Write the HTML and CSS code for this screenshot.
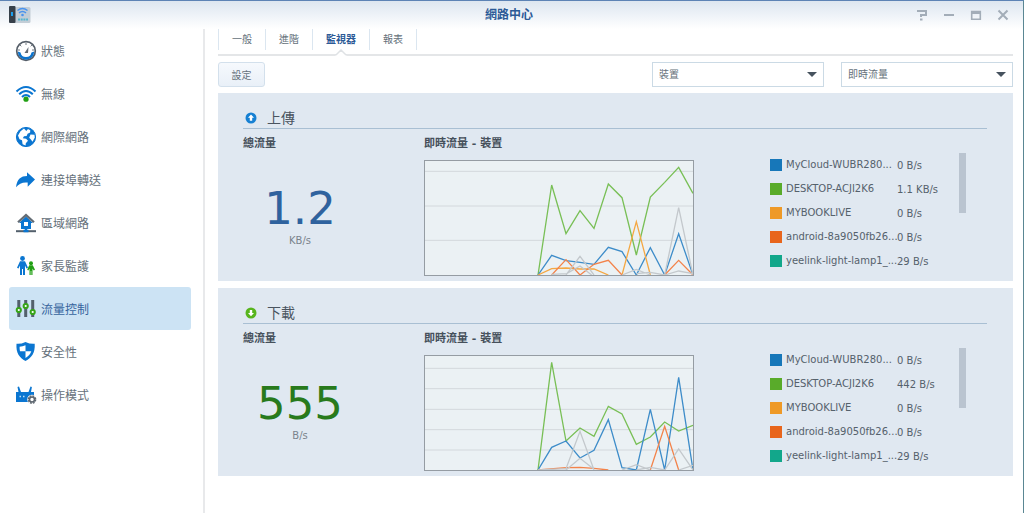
FILE: index.html
```html
<!DOCTYPE html>
<html lang="zh-Hant">
<head>
<meta charset="utf-8">
<title>網路中心</title>
<link rel="stylesheet" href="styles.css">
</head>
<body>
<div class="window">
  <header class="titlebar">
    <svg class="app-icon" width="22" height="18" viewBox="0 0 22 18" aria-hidden="true">
      <rect x="5" y="1" width="16.500" height="16" rx="1.500" fill="#c3cdd6"/>
      <rect x="0" y="0" width="6.500" height="17" rx="1" fill="#36404a"/>
      <rect x="2" y="6" width="2" height="4" fill="#1ba0ee"/>
      <g fill="none" stroke="#4a93ee" stroke-width="1.500"><path d="M8.500 4.500Q13.500 0.500 18.500 4.500"/><path d="M10 6.800Q13.500 4 17 6.800"/></g>
      <circle cx="13.500" cy="9" r="1.300" fill="#4a93ee"/>
      <path d="M9 13.500h10" stroke="#55b6cf" stroke-width="2" stroke-dasharray="2 .7"/>
    </svg>
    <h1 class="title">網路中心</h1>
    <div class="window-buttons">
      <button type="button" aria-label="說明"><svg width="12" height="12" viewBox="0 0 12 12"><path d="M1 2h9v4H5v2M4 10.500h2.500" fill="none" stroke="currentColor" stroke-width="2"/></svg></button>
      <button type="button" aria-label="最小化"><svg width="12" height="12" viewBox="0 0 12 12"><path d="M1 6h10" stroke="currentColor" stroke-width="2"/></svg></button>
      <button type="button" aria-label="最大化"><svg width="12" height="12" viewBox="0 0 12 12"><path d="M1.700 2.500h8.600v7.700H1.700z" fill="none" stroke="currentColor" stroke-width="1.600"/><path d="M1 2h10v3H1z" fill="currentColor"/></svg></button>
      <button type="button" aria-label="關閉"><svg width="12" height="12" viewBox="0 0 12 12"><path d="M1.500 1.500l9 9M10.500 1.500l-9 9" stroke="currentColor" stroke-width="2"/></svg></button>
    </div>
  </header>

  <div class="body">
    <nav class="sidebar" aria-label="功能">
      <a class="nav-item" href="#status"><svg width="22" height="22" viewBox="0 0 22 22"><circle cx="11" cy="11" r="9.300" fill="#fff" stroke="#555e68" stroke-width="1.700"/><path d="M2.800 11.500a8.200 8.200 0 0 0 16.400 0l-2.700 1a5.600 5.600 0 0 1-11 0z" fill="#0c73cc"/><path d="M11 3v2M5 5l1.300 1.300M17 5l-1.300 1.300M3 10h2M19 10h-2" stroke="#747c84"/><path d="M13.500 7l-.5 6H9.500z" fill="#626b75"/></svg><span>狀態</span></a>
      <a class="nav-item" href="#wireless"><svg width="22" height="22" viewBox="0 0 22 22"><g fill="none" stroke="#0b76d1" stroke-width="2"><path d="M1.500 8.500Q11-.5 20.500 8.500"/><path d="M4.200 11.300Q11 4.500 17.800 11.300"/><path d="M7 14Q11 10 15 14"/></g><circle cx="11" cy="16.200" r="2.600" fill="#22a014"/></svg><span>無線</span></a>
      <a class="nav-item" href="#internet"><svg width="22" height="22" viewBox="0 0 22 22"><circle cx="11" cy="11" r="9.600" fill="#0b76d1" stroke="#0b76d1"/><path d="M9 2.500L5.500 5.300 3 9.500l1.500 3.800 2.500 1 .6 4 3 1.200.2-2.300 2.200-2.400-1.900-2-3.300-.6 1.200-2 2.600-.2 1-2.200 2.500-1.300.2-2.300-2.300-1.300-1.700 2zM15.500 8.500l4 .2.300 2.800-2.300 4.300-1.600-2.300-1.700-1.700z" fill="#fff"/></svg><span>網際網路</span></a>
      <a class="nav-item" href="#forwarding"><svg width="22" height="22" viewBox="0 0 22 22"><path d="M1 18.300C2 10 6 7 12 7V3.300l8 7.200-7.300 7.200v-4.200C7.500 13 4 14.500 1 18.300z" fill="#0b76d1"/></svg><span>連接埠轉送</span></a>
      <a class="nav-item" href="#lan"><svg width="22" height="22" viewBox="0 0 22 22"><path d="M11 4.500l7 6.500h-2v6H6v-6H4z" fill="#0b76d1"/><path d="M3 10.300l8-7.200 8 7.200" fill="none" stroke="#646c74" stroke-width="2.200"/><path d="M9 10h4v4H9z" fill="#fff"/><path d="M1 19.200h20" stroke="#53606c" stroke-width="2"/><path d="M8.500 19h5M11 16v3" stroke="#0b76d1" stroke-width="2.400"/></svg><span>區域網路</span></a>
      <a class="nav-item" href="#parental"><svg width="22" height="22" viewBox="0 0 22 22"><g fill="#0b76d1"><circle cx="7.500" cy="3.500" r="2.400"/><path d="M5 6.200h5l3 6.500-1.500.7L10 10.600V20H8v-6H7v6H5v-9.400l-1.500 2.800-1.500-.7z"/></g><g fill="#22a014"><circle cx="16" cy="8.200" r="2"/><path d="M14.200 10.300h3.600l2.200 4.500-1.300.6-1.200-1.900V20h-1.200v-4h-.6v4h-1.200v-6.500l-1.200 1.900-1.100-.6z"/></g></svg><span>家長監護</span></a>
      <a class="nav-item active" href="#traffic" aria-current="page"><svg width="22" height="22" viewBox="0 0 22 22"><path d="M3.800 2v17M10.700 2v17M17.700 2v17" stroke="#53606c" stroke-width="3"/><g fill="#fff" stroke="#36a418" stroke-width="2"><circle cx="3.800" cy="12" r="2.100"/><circle cx="10.700" cy="8" r="2.100"/><circle cx="17.700" cy="14" r="2.100"/></g></svg><span>流量控制</span></a>
      <a class="nav-item" href="#security"><svg width="22" height="22" viewBox="0 0 22 22"><path d="M1.500 2.800Q6 3.200 10.500 1 15 3.200 19.700 2.800C20.300 12 16.500 17 10.500 20 4.500 17 .8 12 1.500 2.800z" fill="#0b76d1"/><path d="M10.500 4.300v6H5Q4.500 8 4.600 5.800q3-.1 5.900-1.500zM10.500 10.300h5.800q-1.300 4.200-5.800 6.600z" fill="#fff"/></svg><span>安全性</span></a>
      <a class="nav-item" href="#mode"><svg width="22" height="22" viewBox="0 0 22 22"><path d="M1 8h2.500L2.500 3l1.500-.4L6 8h7.500l2-5.400 1.400.4L16 8h3v10H1z" fill="#0b76d1"/><path d="M4.500 12.500h1.500M8 12.500h1.500" stroke="#bfe1fa" stroke-width="1.500"/><circle cx="17" cy="15.500" r="4.800" fill="#fff"/><circle cx="17" cy="15.500" r="2.500" fill="none" stroke="#5c656e" stroke-width="1.600"/><circle cx="17" cy="15.500" r="3.700" fill="none" stroke="#5c656e" stroke-width="1.300" stroke-dasharray="1.900 1"/></svg><span>操作模式</span></a>
    </nav>

    <main class="content">
      <nav class="tabs" aria-label="分頁">
        <a class="tab" href="#general">一般</a>
        <a class="tab" href="#advanced">進階</a>
        <a class="tab selected" href="#monitor" aria-current="page">監視器<svg class="notch" width="12" height="7" viewBox="0 0 12 7" aria-hidden="true"><path d="M0 7V6L1 5.500 6 .8l5 4.700 1 .5v1z" fill="#fff"/><path d="M0 6q1 0 2-1l4-4 4 4q1 1 2 1" fill="none" stroke="#dfe2e5" stroke-width="1.500"/></svg></a>
        <a class="tab" href="#report">報表</a>
      </nav>

      <div class="toolbar">
        <button class="settings" type="button">設定</button>
        <div class="filters">
          <div class="select-box"><select aria-label="類型"><option>裝置</option></select></div>
          <div class="select-box"><select aria-label="時間"><option>即時流量</option></select></div>
        </div>
      </div>

      <section class="panel upload">
        <h2 class="panel-title"><svg width="12" height="12" viewBox="0 0 12 12" aria-hidden="true"><circle cx="6" cy="6" r="5.500" fill="#1680d3"/><path d="M6 2.500l3 3.200H7.200v3H4.800v-3H3z" fill="#fff"/></svg><span>上傳</span></h2>
        <div class="panel-grid">
          <div class="stat">
            <h3 class="label">總流量</h3>
            <div class="number">1.2</div>
            <div class="unit">KB/s</div>
          </div>
          <div class="graph">
            <h3 class="label">即時流量 - 裝置</h3>
            <svg class="chart" viewBox="0 0 804 342" preserveAspectRatio="none" role="img" aria-label="上傳即時流量">
              <path class="rule" d="M0 31H804M0 135H804M0 238H804"/>
              <path class="line green" d="M339 342L380 72 423 218 465 149 507 202 550 69 591 110 634 282 676 108 719 64 761 19 804 97"/>
              <path class="line blue" d="M339 342L380 283 423 299 465 304 507 310 550 259 591 272 634 342 676 260 719 342 761 218 804 342"/>
              <path class="line amber" d="M339 342L380 323 423 321 465 324 507 324 550 342M591 342L634 182 676 342"/>
              <path class="line orange" d="M380 342L423 296 465 342 507 310 550 298 591 342M719 342L761 298 804 342"/>
              <path class="line gray" d="M423 342L465 286 507 342M380 340L425 338 465 315 500 342M719 342L761 140 804 342M591 342L634 325 676 342M634 338L676 334 719 342L761 330 804 338"/>
            </svg>
          </div>
          <div class="legend">
            <table>
              <tr><th scope="row"><i class="swatch s-blue"></i>MyCloud-WUBR280...</th><td>0 B/s</td></tr>
              <tr><th scope="row"><i class="swatch s-green"></i>DESKTOP-ACJI2K6</th><td>1.1 KB/s</td></tr>
              <tr><th scope="row"><i class="swatch s-amber"></i>MYBOOKLIVE</th><td>0 B/s</td></tr>
              <tr><th scope="row"><i class="swatch s-orange"></i>android-8a9050fb26...</th><td>0 B/s</td></tr>
              <tr><th scope="row"><i class="swatch s-teal"></i>yeelink-light-lamp1_...</th><td>29 B/s</td></tr>
            </table>
            <div class="scrollbar"></div>
          </div>
        </div>
      </section>

      <section class="panel download">
        <h2 class="panel-title"><svg width="12" height="12" viewBox="0 0 12 12" aria-hidden="true"><circle cx="6" cy="6" r="5.500" fill="#58b51e"/><path d="M6 9.300L3 6.100h1.800v-3h2.400v3H9z" fill="#fff"/></svg><span>下載</span></h2>
        <div class="panel-grid">
          <div class="stat">
            <h3 class="label">總流量</h3>
            <div class="number">555</div>
            <div class="unit">B/s</div>
          </div>
          <div class="graph">
            <h3 class="label">即時流量 - 裝置</h3>
            <svg class="chart" viewBox="0 0 804 342" preserveAspectRatio="none" role="img" aria-label="下載即時流量">
              <path class="rule" d="M0 37H804M0 98H804M0 160H804M0 221H804M0 282H804"/>
              <path class="line green" d="M339 342L380 19 423 255 465 216 507 241 550 151 591 174 634 265 676 243 719 198 761 225 804 208"/>
              <path class="line blue" d="M339 342L380 274 423 255 465 306 507 283 550 191 591 335 634 342 676 160 719 342 761 64 804 342"/>
              <path class="line orange" d="M339 342L423 335 465 334 507 337 550 342M676 342L719 211 761 342"/>
              <path class="line gray" d="M339 342L423 338 465 226 507 342M423 342L465 307 507 340M591 342L634 326 676 342M634 342L676 334 719 342L761 279 804 342M761 342L804 328"/>
            </svg>
          </div>
          <div class="legend">
            <table>
              <tr><th scope="row"><i class="swatch s-blue"></i>MyCloud-WUBR280...</th><td>0 B/s</td></tr>
              <tr><th scope="row"><i class="swatch s-green"></i>DESKTOP-ACJI2K6</th><td>442 B/s</td></tr>
              <tr><th scope="row"><i class="swatch s-amber"></i>MYBOOKLIVE</th><td>0 B/s</td></tr>
              <tr><th scope="row"><i class="swatch s-orange"></i>android-8a9050fb26...</th><td>0 B/s</td></tr>
              <tr><th scope="row"><i class="swatch s-teal"></i>yeelink-light-lamp1_...</th><td>29 B/s</td></tr>
            </table>
            <div class="scrollbar"></div>
          </div>
        </div>
      </section>
    </main>
  </div>
</div>
</body>
</html>
```

FILE: styles.css
```css
* {
  box-sizing: border-box;
}

body {
  margin: 0;
  background: #fff;
  color: #65717b;
  font-family: "DejaVu Sans", "Noto Sans CJK TC", sans-serif;
  font-size: 11px;
}

h1, h2, h3 {
  margin: 0;
}

a {
  color: inherit;
  text-decoration: none;
}

button, select {
  margin: 0;
  font-family: inherit;
  color: inherit;
}

.window {
  display: flex;
  flex-direction: column;
  min-height: 100vh;
  border-top: 1px solid #5d83b5;
  border-right: 1px solid #5a8793;
}

/* Title bar */
.titlebar {
  display: grid;
  grid-template-columns: 1fr auto 1fr;
  align-items: center;
  height: 28px;
  padding: 0 14px 0 9px;
  background: linear-gradient(#dde6f0, #fff);
}

.title {
  color: #2c5a96;
  font-size: 12px;
  line-height: 20px;
}

.window-buttons {
  display: flex;
  justify-content: flex-end;
  gap: 15px;
  color: #a3adb8;
}

.window-buttons button {
  display: flex;
  padding: 0;
  border: 0;
  background: none;
}

.body {
  display: flex;
  flex: 1;
}

/* Sidebar */
.sidebar {
  flex: none;
  width: 205px;
  padding: 0 12px 0 9px;
  border-right: 2px solid #e8e9eb;
}

.nav-item {
  display: flex;
  align-items: center;
  gap: 4px;
  height: 43px;
  padding-left: 6px;
  border-radius: 3px;
  font-size: 12px;
}

.nav-item.active {
  background: #cce3f4;
  color: #35639d;
}

/* Main area */
.content {
  flex: 1;
  min-width: 0;
  padding: 0 10px 36px 13px;
}

.tabs {
  display: flex;
  height: 27px;
  padding-bottom: 4px;
  border-bottom: 2px solid #e4e6e8;
}

.tab {
  position: relative;
  padding: 0 13px;
  border-left: 1px solid #dbe6f0;
  font-size: 10px;
  line-height: 22px;
}

.tab:last-child {
  border-right: 1px solid #dbe6f0;
}

.tab.selected {
  color: #2c5a96;
  font-weight: bold;
}

.notch {
  position: absolute;
  left: 50%;
  bottom: -6px;
  margin-left: -6px;
}

.toolbar {
  display: flex;
  justify-content: space-between;
  padding: 6px 0;
}

.settings {
  width: 47px;
  height: 25px;
  padding: 0;
  border: 1px solid #d3e0ec;
  border-radius: 3px;
  background: linear-gradient(#f6f9fd, #e9f0f8);
  font-size: 10px;
}

.filters {
  display: flex;
  gap: 17px;
}

.select-box {
  position: relative;
  width: 172px;
}

.select-box::after {
  content: "";
  position: absolute;
  top: 10px;
  right: 7px;
  border: solid transparent;
  border-width: 5px 5px 0;
  border-top-color: #46525e;
  pointer-events: none;
}

.select-box select {
  width: 100%;
  height: 25px;
  padding: 0 6px;
  border: 1px solid #cbdae5;
  border-radius: 0;
  background: #fff;
  font-size: 10px;
  appearance: none;
}

/* Traffic panels */
.panel {
  padding: 14px 26px 5px 25px;
  background: #e0e8f1;
}

.panel + .panel {
  margin-top: 7px;
}

.panel-title {
  display: flex;
  align-items: center;
  gap: 10px;
  height: 22px;
  padding-left: 2px;
  border-bottom: 1px solid #a9bfd3;
  color: #4a545f;
  font-size: 14px;
  font-weight: normal;
  line-height: 20px;
}

.panel-grid {
  display: grid;
  grid-template-columns: 181px minmax(0, 1fr) 217px;
  padding-top: 5px;
}

.label {
  color: #46505b;
  font-size: 11px;
  line-height: 20px;
}

.stat {
  width: 114px;
}

.number {
  margin-top: 30px;
  font-size: 45px;
  line-height: 50px;
  text-align: center;
}

.upload .number {
  color: #2f629e;
}

.download .number {
  color: #287a1c;
}

.unit {
  color: #7a838c;
  font-size: 10px;
  line-height: 14px;
  text-align: center;
}

.graph {
  margin-right: 76px;
}

.chart {
  display: block;
  width: 100%;
  height: 116px;
  margin-top: 6px;
  border: 1px solid #959ca3;
  background: #ebf1f4;
}

.rule, .line {
  fill: none;
  vector-effect: non-scaling-stroke;
}

.rule {
  stroke: #d3d8dc;
}

.line {
  stroke-width: 1.3;
}

.line.green { stroke: #78bf55; }
.line.blue { stroke: #3d8cc9; }
.line.amber { stroke: #f5a742; }
.line.orange { stroke: #f3834a; }
.line.gray { stroke: #c3c8cc; }

.legend {
  display: flex;
  align-items: flex-start;
  justify-content: space-between;
  padding: 19px 21px 0 0;
}

.legend table {
  border-collapse: collapse;
  color: #55616c;
  font-size: 10px;
}

.legend th,
.legend td {
  height: 24px;
  padding: 0;
  font-weight: normal;
  text-align: left;
  white-space: nowrap;
}

.legend th {
  width: 127px;
  max-width: 127px;
}

.swatch {
  display: inline-block;
  width: 12px;
  height: 12px;
  margin-right: 4px;
  vertical-align: middle;
}

.s-blue { background: #1777b9; }
.s-green { background: #59ab2a; }
.s-amber { background: #ee9927; }
.s-orange { background: #e8651c; }
.s-teal { background: #12a78b; }

.scrollbar {
  width: 7px;
  height: 60px;
  background: #bac4d0;
}
```
